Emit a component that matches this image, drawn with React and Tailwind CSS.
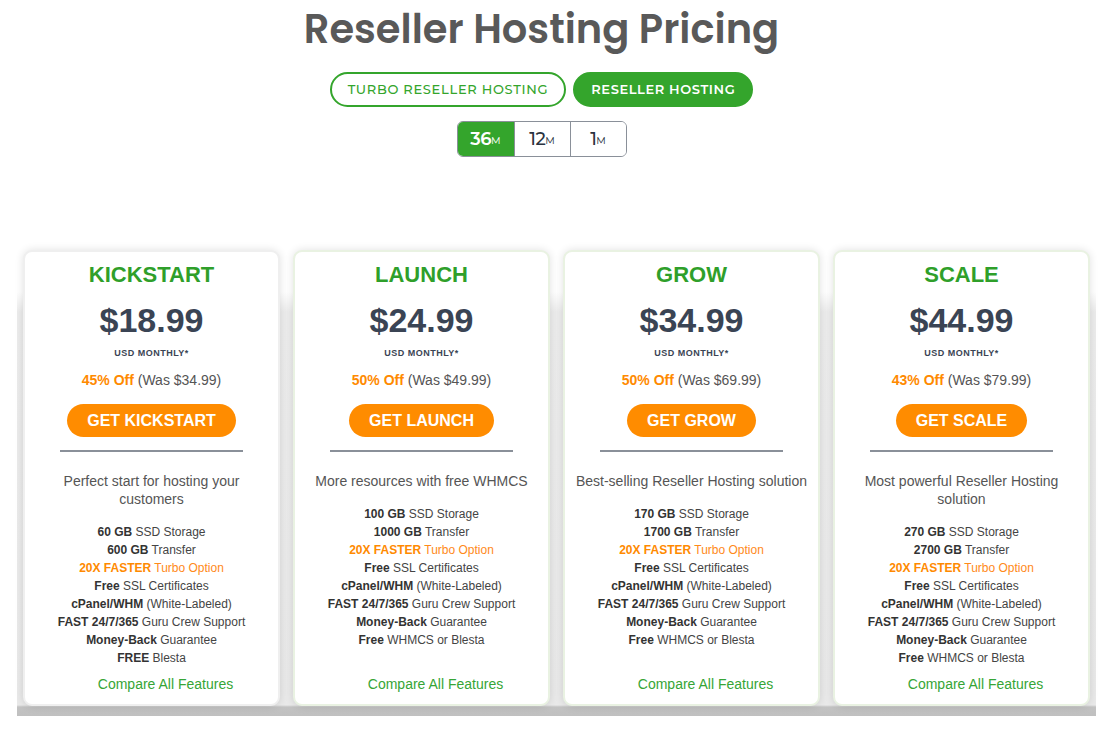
const plans = [
    {
        name: "KICKSTART",
        price: "18.99",
        off: "45% Off",
        was: "34.99",
        desc: "Perfect start for hosting your customers",
        features: [
            ["60 GB", " SSD Storage"],
            ["600 GB", " Transfer"],
            ["20X FASTER", " Turbo Option", true],
            ["Free", " SSL Certificates"],
            ["cPanel/WHM", " (White-Labeled)"],
            ["FAST 24/7/365", " Guru Crew Support"],
            ["Money-Back", " Guarantee"],
            ["FREE", " Blesta"],
        ],
        border: "border-[#efefef]",
    },
    {
        name: "LAUNCH",
        price: "24.99",
        off: "50% Off",
        was: "49.99",
        desc: "More resources with free WHMCS",
        features: [
            ["100 GB", " SSD Storage"],
            ["1000 GB", " Transfer"],
            ["20X FASTER", " Turbo Option", true],
            ["Free", " SSL Certificates"],
            ["cPanel/WHM", " (White-Labeled)"],
            ["FAST 24/7/365", " Guru Crew Support"],
            ["Money-Back", " Guarantee"],
            ["Free", " WHMCS or Blesta"],
        ],
        border: "border-[#e9f2e2]",
    },
    {
        name: "GROW",
        price: "34.99",
        off: "50% Off",
        was: "69.99",
        desc: "Best-selling Reseller Hosting solution",
        features: [
            ["170 GB", " SSD Storage"],
            ["1700 GB", " Transfer"],
            ["20X FASTER", " Turbo Option", true],
            ["Free", " SSL Certificates"],
            ["cPanel/WHM", " (White-Labeled)"],
            ["FAST 24/7/365", " Guru Crew Support"],
            ["Money-Back", " Guarantee"],
            ["Free", " WHMCS or Blesta"],
        ],
        border: "border-[#e9f2e2]",
    },
    {
        name: "SCALE",
        price: "44.99",
        off: "43% Off",
        was: "79.99",
        desc: "Most powerful Reseller Hosting solution",
        features: [
            ["270 GB", " SSD Storage"],
            ["2700 GB", " Transfer"],
            ["20X FASTER", " Turbo Option", true],
            ["Free", " SSL Certificates"],
            ["cPanel/WHM", " (White-Labeled)"],
            ["FAST 24/7/365", " Guru Crew Support"],
            ["Money-Back", " Guarantee"],
            ["Free", " WHMCS or Blesta"],
        ],
        border: "border-[#e9f2e2]",
    },
];

function PlanCard({ plan }) {
    return (
        <div
            className={`flex flex-col rounded-[9px] border-2 ${plan.border} bg-white px-2 pb-[11px] pt-[9px] text-center shadow-[0_0_8px_rgba(0,0,0,0.12)]`}
        >
            <h2 className="text-[22px] font-bold leading-[28px] text-[#2f9f2a]">
                {plan.name}
            </h2>
            <div className="mt-[11px] text-[34px] font-bold leading-[40px] text-[#3a4454]">
                ${plan.price}
            </div>
            <div className="mt-[7px] text-[9px] font-bold leading-[12px] tracking-[0.5px] text-[#3a4454]">
                USD MONTHLY*
            </div>
            <div className="mt-[12px] text-[14px] leading-[18px] text-[#555]">
                <span className="font-bold text-[#ff8a00]">{plan.off}</span>{" "}
                (Was ${plan.was})
            </div>
            <div className="mt-[15px] flex justify-center">
                <button
                    type="button"
                    className="h-[33px] rounded-full bg-[#ff8c00] px-5 text-[16px] font-bold text-white"
                >
                    GET {plan.name}
                </button>
            </div>
            <div className="mx-auto mt-[13px] h-[2px] w-[183px] bg-[#8a9099]" />
            <p className="mt-[20px] text-[14px] leading-[18px] text-[#555]">
                {plan.desc}
            </p>
            <ul className="mt-[15px] text-[12px] leading-[18px] text-[#444]">
                {plan.features.map(([strong, rest, hot], idx) => (
                    <li key={idx} className={hot ? "text-[#ff8a1a]" : ""}>
                        <b className={hot ? "text-[#ff8a00]" : "text-[#333]"}>{strong}</b>
                        {rest}
                    </li>
                ))}
            </ul>
            <a className="mt-auto pl-[28px] pt-[8px] text-[14px] leading-[18px] text-[#36a536]">
                Compare All Features
            </a>
        </div>
    );
}

export default function App() {
    return (
        <div className="min-h-[729px] bg-white font-['Liberation_Sans',Arial,sans-serif]">
            <div className="flex flex-col items-center pr-[30px]">
                <h1 className="mt-[5px] font-['Poppins','Open_Sans',sans-serif] text-[40px] font-semibold leading-[48px] text-[#595959]">
                    Reseller Hosting Pricing
                </h1>
                <div className="mt-[19px] flex gap-[7px] font-['Montserrat','Open_Sans',sans-serif]">
                    <button
                        type="button"
                        className="h-[35px] rounded-full border-2 border-[#34a52c] px-4 text-[13px] font-medium tracking-[0.7px] text-[#34a52c]"
                    >
                        TURBO RESELLER HOSTING
                    </button>
                    <button
                        type="button"
                        className="h-[35px] rounded-full border-2 border-[#34a52c] bg-[#34a52c] px-4 text-[13px] font-semibold tracking-[0.6px] text-white"
                    >
                        RESELLER HOSTING
                    </button>
                </div>
                <div className="mt-[14px] flex h-9 overflow-hidden rounded-[6px] border border-[#8a9099] font-['Montserrat','Open_Sans',sans-serif]">
                    {[
                        ["36", true],
                        ["12", false],
                        ["1", false],
                    ].map(([n, active], idx) => (
                        <div
                            key={n}
                            className={`flex w-[56px] items-center justify-center ${
                                idx > 0 ? "border-l border-[#8a9099]" : ""
                            } ${active ? "bg-[#34a52c] font-semibold text-white" : "bg-white font-medium text-[#2b3340]"}`}
                        >
                            <span className="text-[18px] tracking-[-0.5px]">{n}</span>
                            <span className="mt-[3px] text-[10px] font-normal">M</span>
                        </div>
                    ))}
                </div>
            </div>

            <div className="mx-[17px] mt-[93px] grid grid-cols-4 gap-[13px] bg-[linear-gradient(to_bottom,#ffffff_0px,#ffffff_42px,#ececec_62px,#e9e9e9_calc(100%-11px),#c2c2c2_calc(100%-9px),#c0c0c0_100%)] px-[6px] pb-[10px]">
                {plans.map((plan) => (
                    <PlanCard key={plan.name} plan={plan} />
                ))}
            </div>
        </div>
    );
}
